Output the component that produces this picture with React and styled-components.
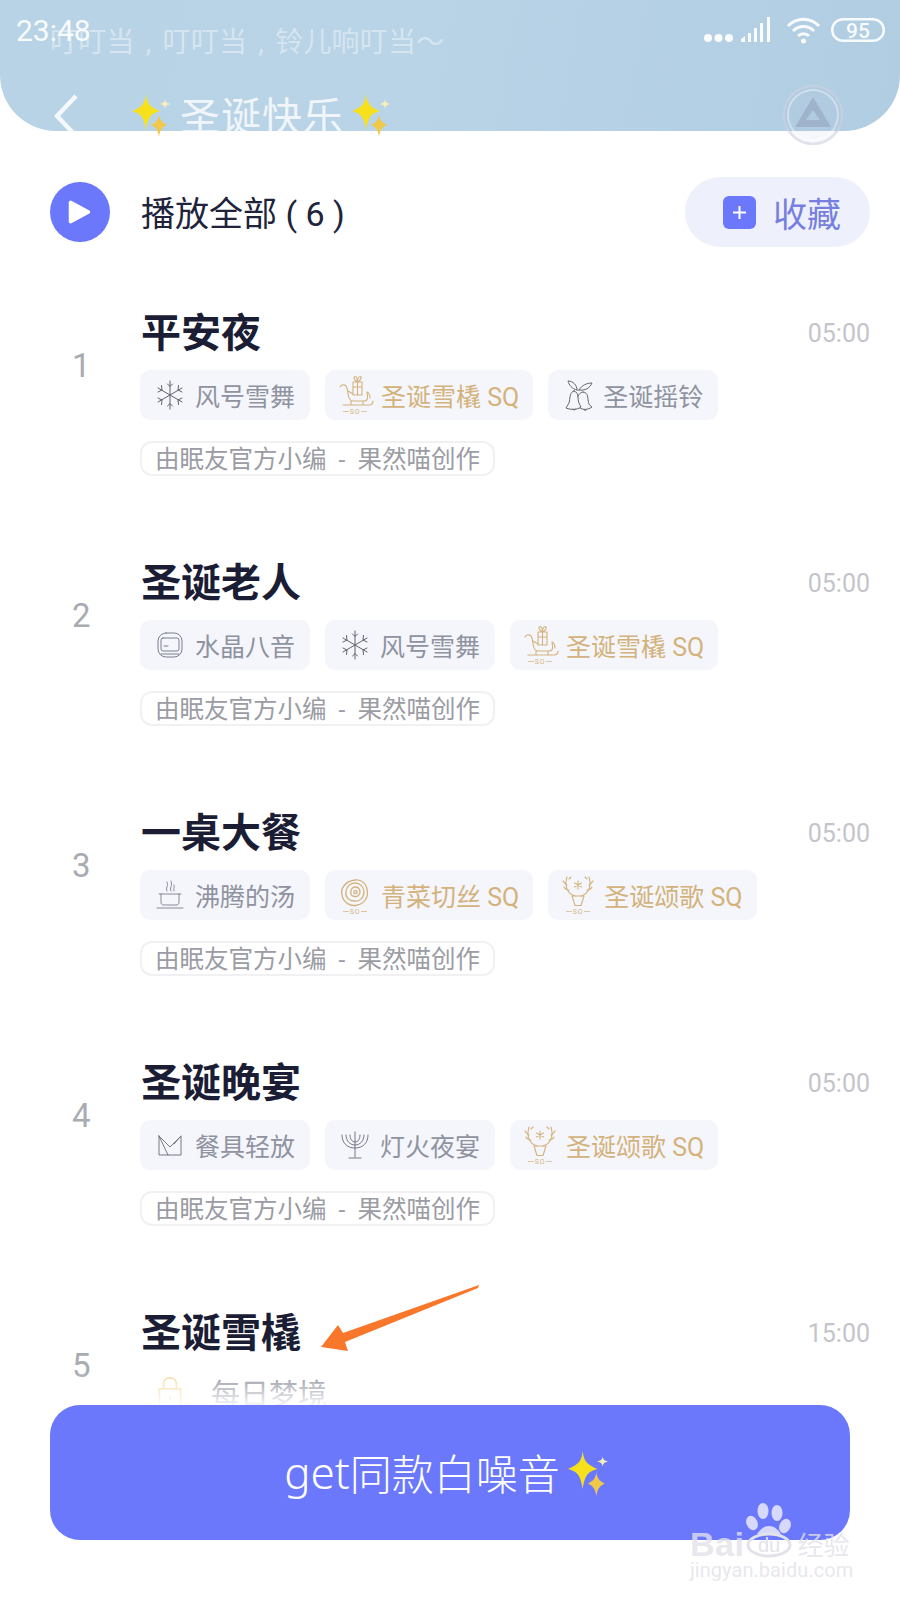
import React from 'react';
import styled, { createGlobalStyle } from 'styled-components';

const Global = createGlobalStyle`
  html, body { margin: 0; padding: 0; background: #fff; }
  body { font-family: Roboto, "Noto Sans CJK SC", sans-serif; }
  * { box-sizing: border-box; }
`;
const Page = styled.div`
  position: relative; width: 900px; height: 1600px; overflow: hidden; background: #fff;
`;
const Header = styled.header`
  position: relative; height: 131px; padding: 18px 14px 0 16px;
  background: linear-gradient(100deg, #b9d3e6 0%, #b9d4e7 45%, #b1cde2 100%);
  border-radius: 0 0 56px 56px;
`;
const StatusBar = styled.div`
  display: flex; align-items: center; justify-content: space-between; height: 26px;
`;
const Clock = styled.span`
  font-size: 30px; line-height: 26px; color: rgba(255,255,255,.92);
`;
const StatusIcons = styled.div`display: flex; align-items: center; height: 26px;`;
const Lyric = styled.div`
  position: absolute; left: 50px; top: 24px; font-size: 28px; line-height: 38px; white-space: nowrap;
  color: rgba(255,255,255,.42); word-spacing: 4px; letter-spacing: .2px;
`;
const NavBar = styled.div`
  display: flex; align-items: center; height: 50px; margin-top: 47px; padding-left: 38px;
`;
const Back = styled.svg`width: 24px; height: 46px; margin-right: 54px; flex: none;`;
const Title = styled.h1`
  margin: 0 8px; font-size: 40px; line-height: 54px; height: 50px; font-weight: 400; color: rgba(255,255,255,.8); letter-spacing: 1px;
`;
const Floating = styled.svg`
  position: absolute; left: 782px; top: 84px; width: 62px; height: 62px;
`;
const PlayRow = styled.div`
  display: flex; align-items: center; height: 70px; margin-top: 46px; padding: 0 30px 0 50px;
`;
const PlayCircle = styled.div`
  width: 60px; height: 60px; border-radius: 50%; background: #6b78fc; display: flex; align-items: center; justify-content: center; flex: none;
`;
const PlayLabel = styled.div`
  margin-left: 31px; padding-top: 3px; flex: 1; font-size: 34px; color: #20233a; line-height: 44px; white-space: pre;
`;
const Collect = styled.button`
  display: flex; align-items: center; width: 185px; height: 70px; border: 0; border-radius: 35px; background: #eef1fc;
  padding: 0 0 0 38px; font: inherit; font-size: 34px; color: #767fdf;
`;
const PlusBox = styled.span`
  width: 33px; height: 33px; border-radius: 6px; background: #6b78fc; margin-right: 17px; display: flex; align-items: center; justify-content: center;
`;
const List = styled.div`margin-top: 60px;`;
const Row = styled.div`
  display: grid; grid-template-columns: 141px 1fr auto; height: 250px; padding-right: 30px;
`;
const Num = styled.div`
  padding-left: 72px; margin-top: 39px; font-size: 33px; line-height: 40px; color: #a9abb3;
`;
const Song = styled.h2`
  margin: 0; height: 50px; font-size: 40px; line-height: 54px; font-weight: 700; color: #1b1d34;
`;
const Time = styled.div`
  font-size: 25px; line-height: 54px; color: #c3c5cb;
`;
const Tags = styled.div`display: flex; gap: 15px; margin: 13px 0 0 -1px;`;
const Tag = styled.div`
  display: flex; align-items: center; height: 50px; border-radius: 10px; background: ${p => p.$plain ? 'transparent' : '#f5f6fb'};
  padding: 0 ${p => p.$gold ? 14 : 15}px ${p => p.$big ? 6 : 0}px ${p => p.$gold ? 12 : 14}px; font-size: ${p => p.$big ? 29 : 25}px; white-space: nowrap;
  color: ${p => p.$gold ? '#d3b27c' : '#8f92a0'};
`;
const IconBox = styled.svg`
  width: ${p => p.$gold ? 44 : 32}px; height: ${p => p.$gold ? 46 : 32}px; flex: none; margin-right: ${p => p.$gold ? 0 : 9}px;
`;
const Credit = styled.div`
  display: inline-flex; align-items: center; height: 35px; margin: 21px 0 0 -1px; padding: 0 13px 3px; border: 2px solid #f1f1f4; border-radius: 12px;
  font-size: 24.5px; color: #9b9ca4; white-space: nowrap; word-spacing: 6px;
`;
const Footer = styled.div`
  position: absolute; left: 0; right: 0; top: 1372px; bottom: 0; padding: 33px 50px 0;
  background: linear-gradient(rgba(255,255,255,0) 0, rgba(255,255,255,.9) 33px, #fff 33px);
`;
const GetButton = styled.button`
  display: flex; align-items: center; justify-content: center; width: 800px; height: 135px; border: 0; border-radius: 30px; background: #6b78fc;
  color: #fff; font: inherit; font-size: 42px; font-weight: 300; padding: 0 6px 2px 0;
`;
const Latin = styled.span`font-family: "Noto Sans", sans-serif; font-size: 44px;`;
const Arrow = styled.svg`position: absolute; left: 315px; top: 1280px; width: 170px; height: 75px;`;
const Watermark = styled.div`
  position: absolute; left: 690px; top: 1500px; width: 165px; height: 84px; color: rgba(225,225,232,.8);
`;
const WmLogo = styled.div`
  display: flex; align-items: flex-end; height: 58px; font-weight: 700; line-height: 28px;
`;
const WmBai = styled.span`font-size: 34px; letter-spacing: .5px; font-family: "Liberation Sans", sans-serif;`;
const WmPaw = styled.svg`width: 54px; height: 58px; flex: none; margin: 0 0 0 -1px;`;
const WmJing = styled.span`font-size: 26px; font-weight: 400; position: relative; top: 2px;`;
const WmDomain = styled.div`font-size: 20px; line-height: 24px; letter-spacing: .05px;`;

const Sparkle = ({ size = 40, style }) => (
  <svg width={size} height={size * 1.08} viewBox="0 0 40 43" style={style}>
    <path d="M14 0 C15 9 17.5 13 28 17 C19 19.5 16 23 14 36 C12 23 9 19.5 0 17 C10.5 13 13 9 14 0Z" fill="#f6e11c" />
    <path d="M27 20 C27.6 26 30 28.5 35 31 C30 33 28 36 27 43 C26 36 24 33 19 31 C24 28.5 26.4 26 27 20Z" fill="#f1c94a" />
    <path d="M33 5 C33.3 8 34.5 9 38 10 C34.5 11 33.3 12 33 15 C32.7 12 31.5 11 28 10 C31.5 9 32.7 8 33 5Z" fill="#f8efb4" />
  </svg>
);

const line = { fill: 'none', stroke: 'currentColor', strokeWidth: 1, strokeLinecap: 'round', strokeLinejoin: 'round' };
const G = ({ children, w = 1 }) => <g {...line} strokeWidth={w}>{children}</g>;
const SoMark = ({ y = 42 }) => (
  <g>
    <path d={`M6 ${y - 2.5}H12M24 ${y - 2.5}H30`} stroke="currentColor" strokeWidth=".7" />
    <text x="18" y={y} textAnchor="middle" fontSize="7" fill="currentColor" letterSpacing=".8" fontFamily="Roboto">SO</text>
  </g>
);
const Snow = () => (
  <IconBox viewBox="0 0 32 32" style={{ color: '#5f6270' }}><G>
    <path d="M16 2V30M4 9L28 23M28 9L4 23M13.5 5L16 7.5L18.5 5M13.5 27L16 24.5L18.5 27M4 13L8 11L7.5 6.5M28 13L24 11L24.5 6.5M4 19L8 21L7.5 25.5M28 19L24 21L24.5 25.5" />
  </G></IconBox>
);
const Bell = () => (
  <IconBox viewBox="0 0 32 32" style={{ color: '#62646f' }}><G>
    <path d="M12 12C8 13 8 18 7.5 22C7 25 5 27 4 29C9 31 15 31 19 28C17 25 16 22 16 18C16 15 15 13 12 12Z" />
    <path d="M21 13C25 13 26 17 26 21C26.5 25 28 27 30 28C26 31 21 31 18 29M16 17C17 15 19 13 21 13" />
    <path d="M15 11C10 10 7 6 6 2C11 2 15 6 15 11ZM17 11C20 6 25 4 30 4C28 9 23 12 17 11ZM11 30C11.5 31.5 13 31.5 13.5 30M22 30.5C22.5 32 24 32 24.5 30.5" />
  </G></IconBox>
);
const Crystal = () => (
  <IconBox viewBox="0 0 32 32" style={{ color: '#7b7e8f' }}><G>
    <rect x="4" y="4" width="24" height="24" rx="8" /><rect x="7" y="9" width="18" height="13" rx="2" />
    <path d="M7 25H25M10 17H14" />
  </G></IconBox>
);
const Soup = () => (
  <IconBox viewBox="0 0 32 32" style={{ color: '#7b7e8f' }}><G w=".9">
    <path d="M5 15H27M7 15V23C7 25 8 26 10 26H22C24 26 25 25 25 23V15M3 29H29" />
    <path d="M13 12C11 9 15 7 13 3M17 12C15 9 19 7 17 2M20 12C19 10 21 9 20 6" />
  </G></IconBox>
);
const Napkin = () => (
  <IconBox viewBox="0 0 32 32" style={{ color: '#686a78' }}><G w=".9">
    <path d="M5 7V26H27V7L16 18L5 7ZM5 7L14 26M27 7L20 15" />
  </G></IconBox>
);
const Menorah = () => (
  <IconBox viewBox="0 0 32 32" style={{ color: '#686a78' }}><G w=".9">
    <path d="M16 3V28M10 29H22M3 6C3 14 8 19 16 19C24 19 29 14 29 6M7 6C7 12 11 16 16 16C21 16 25 12 25 6M11 6C11 10 13 13 16 13C19 13 21 10 21 6" />
  </G></IconBox>
);
const Lock = () => (
  <IconBox viewBox="0 0 32 32" style={{ color: '#f5d99f', margin: '0 24px 0 -1px', width: 34, height: 40 }}><G w={1.6}>
    <path d="M6 13H26V31H6ZM10 13V8C10 1 22 1 22 8V13M16 20V24" />
  </G></IconBox>
);
const Sleigh = () => (
  <IconBox $gold viewBox="0 0 44 46" style={{ color: '#d3b27c' }}><G w={1.1}>
    <path d="M3 15C5 11.5 9 12.5 10 16L11.5 24C12 27.5 14 29 17 29H27C30 29 31 27 30.5 24L30 20C32 21 33 24 33 26M14 29V33M26 29V33M6 33H32C34.5 33 36 31.5 36 29" />
    <path d="M11 19L16 22M16 10H25V23H16ZM20.5 10V23M16 15H25M20.5 10C17 8 16 5 18 4.5C19.5 4.5 20.5 7 20.5 10C20.5 7 21.5 4.5 23.5 4.5C25 5 24 8 20.5 10Z" />
  </G><SoMark /></IconBox>
);
const Rose = () => (
  <IconBox $gold viewBox="0 0 44 46" style={{ color: '#d3b27c' }}><G w={1.3}>
    <path d="M18 8C24 7 30 12 30 18C32 25 27 32 20 33C13 35 6 30 5 23C3 16 9 9 18 8Z" />
    <path d="M18 11C23 11 27 15 27 20C27 26 22 30 17 29C12 29 8 25 9 20C9 15 13 11 18 11Z" />
    <path d="M18 15C21 15 23 17 23 20C23 23 20 25 18 24.5C15 24.5 13 22.5 14 19.5C14 17 16 15 18 15Z" />
    <path d="M18 18.5C19.5 18.5 20 19.5 20 20.5C20 21.5 18.5 22 17.5 21.5C16.5 21 16.5 19 18 18.5Z" />
  </G><SoMark /></IconBox>
);
const Deer = () => (
  <IconBox $gold viewBox="0 0 44 46" style={{ color: '#d3b27c' }}><G w={1.1}>
    <path d="M15 24C8 22 4 15 7 5M7 13C5 12 4 10 3 9M9 18C7 18 5 17 4 15M9 7L11 5M21 24C28 22 32 15 29 5M29 13C31 12 32 10 33 9M27 18C29 18 31 17 32 15M27 7L25 5" />
    <path d="M12 24H24L21 33.5H15Z" />
    <path d="M18 9V17M14.5 11L21.5 15M21.5 11L14.5 15" />
  </G><SoMark /></IconBox>
);

const songs = [
  { n: 1, t: '平安夜', d: '05:00', tags: [['风号雪舞', <Snow />], ['圣诞雪橇 SQ', <Sleigh />, 1], ['圣诞摇铃', <Bell />]] },
  { n: 2, t: '圣诞老人', d: '05:00', tags: [['水晶八音', <Crystal />], ['风号雪舞', <Snow />], ['圣诞雪橇 SQ', <Sleigh />, 1]] },
  { n: 3, t: '一桌大餐', d: '05:00', tags: [['沸腾的汤', <Soup />], ['青菜切丝 SQ', <Rose />, 1], ['圣诞颂歌 SQ', <Deer />, 1]] },
  { n: 4, t: '圣诞晚宴', d: '05:00', tags: [['餐具轻放', <Napkin />], ['灯火夜宴', <Menorah />], ['圣诞颂歌 SQ', <Deer />, 1]] },
];

export default function App() {
  return (
    <Page>
      <Global />
      <Header>
        <StatusBar>
          <Clock>23:48</Clock>
          <StatusIcons>
            <svg width="182" height="28" viewBox="0 0 182 28" fill="#fff" opacity=".92">
              <circle cx="4" cy="21" r="4" /><circle cx="14.5" cy="21" r="4" /><circle cx="25" cy="21" r="4" />
              <path d="M37 22l4-3v6h-4zM44 16h3v9h-3zM50 11h3v14h-3zM56 6h3v19h-3zM63 0h3v25h-3z" />
              <path d="M84 9C93 0 106 0 115 9" fill="none" stroke="#fff" strokeWidth="3" />
              <path d="M89 14C95 8 104 8 110 14" fill="none" stroke="#fff" strokeWidth="3" />
              <path d="M94 19C97 16 102 16 105 19" fill="none" stroke="#fff" strokeWidth="3" />
              <circle cx="99.5" cy="24" r="2.5" />
              <rect x="128.2" y="2.2" width="51.6" height="21.6" rx="10.8" fill="none" stroke="#fff" strokeWidth="2.5" />
              <text x="154" y="20.5" textAnchor="middle" fontSize="21" fontWeight="500" fill="#fff" fontFamily="Roboto">95</text>
            </svg>
          </StatusIcons>
        </StatusBar>
        <Lyric>叮叮当 , 叮叮当 , 铃儿响叮当～</Lyric>
        <NavBar>
          <Back viewBox="0 0 24 46"><path d="M22 3L3 23L22 43" fill="none" stroke="#fff" strokeOpacity=".85" strokeWidth="4.5" /></Back>
          <Sparkle size={40} />
          <Title>圣诞快乐</Title>
          <Sparkle size={40} />
        </NavBar>
        <Floating viewBox="0 0 62 62">
          <circle cx="31" cy="31" r="29" fill="rgba(170,180,205,.1)" stroke="rgba(205,210,225,.6)" strokeWidth="2.5" />
          <circle cx="31" cy="31" r="25" fill="none" stroke="rgba(255,255,255,.4)" strokeWidth="2" />
          <path d="M31 13L49 43H13ZM31 26L24 36H38Z" fill="#8f9cb8" fillOpacity=".5" fillRule="evenodd" />
        </Floating>
      </Header>

      <PlayRow>
        <PlayCircle>
          <svg width="24" height="26" viewBox="0 0 24 26"><path d="M3 2.5L21 12.2a1 1 0 0 1 0 1.6L3 23.5a1 1 0 0 1-1.5-1V3.5a1 1 0 0 1 1.5-1Z" fill="#fff" stroke="#fff" strokeWidth="1.5" strokeLinejoin="round" /></svg>
        </PlayCircle>
        <PlayLabel>播放全部 ( 6 )</PlayLabel>
        <Collect>
          <PlusBox><svg width="15" height="15" viewBox="0 0 15 15"><path d="M7.5 1V14M1 7.5H14" stroke="#fff" strokeWidth="2" /></svg></PlusBox>
          收藏
        </Collect>
      </PlayRow>

      <List>
        {songs.map(s => (
          <Row key={s.n}>
            <Num>{s.n}</Num>
            <div>
              <Song>{s.t}</Song>
              <Tags>
                {s.tags.map(([label, icon, gold]) => (
                  <Tag key={label} $gold={!!gold}>{icon}{label}</Tag>
                ))}
              </Tags>
              <Credit>由眠友官方小编 - 果然喵创作</Credit>
            </div>
            <Time>{s.d}</Time>
          </Row>
        ))}
        <Row>
          <Num>5</Num>
          <div>
            <Song>圣诞雪橇</Song>
            <Tags><Tag $plain $big><Lock />每日梦境</Tag></Tags>
          </div>
          <Time>15:00</Time>
        </Row>
      </List>

      <Footer>
        <GetButton><Latin>get</Latin>同款白噪音<Sparkle size={42} style={{ marginLeft: 8, marginTop: 4 }} /></GetButton>
      </Footer>

      <Arrow viewBox="0 0 170 75">
        <path d="M164 5L163 8L30 62L33 71L6 67L23 45L28 53Z" fill="#f9772a" />
      </Arrow>

      <Watermark>
        <WmLogo>
          <WmBai>Bai</WmBai>
          <WmPaw viewBox="0 0 54 58">
            <g fill="#e2e3fb" fillOpacity=".9">
              <ellipse cx="20" cy="11" rx="5.5" ry="8" /><ellipse cx="34" cy="13" rx="5.5" ry="8" />
              <ellipse cx="9" cy="23" rx="5.5" ry="7.5" transform="rotate(-25 9 23)" /><ellipse cx="42" cy="26" rx="5.5" ry="7.5" transform="rotate(25 42 26)" />
              <path d="M26 26C32 26 35 30 38 34H14C17 30 20 26 26 26Z" />
            </g>
            <ellipse cx="26" cy="45" rx="21" ry="11" fill="none" stroke="#e2e3ea" strokeWidth="3" />
            <text x="26" y="52" textAnchor="middle" fontSize="20" fill="#e2e3ea" fontWeight="400" fontFamily="Liberation Sans">du</text>
          </WmPaw>
          <WmJing>经验</WmJing>
        </WmLogo>
        <WmDomain>jingyan.baidu.com</WmDomain>
      </Watermark>
    </Page>
  );
}
